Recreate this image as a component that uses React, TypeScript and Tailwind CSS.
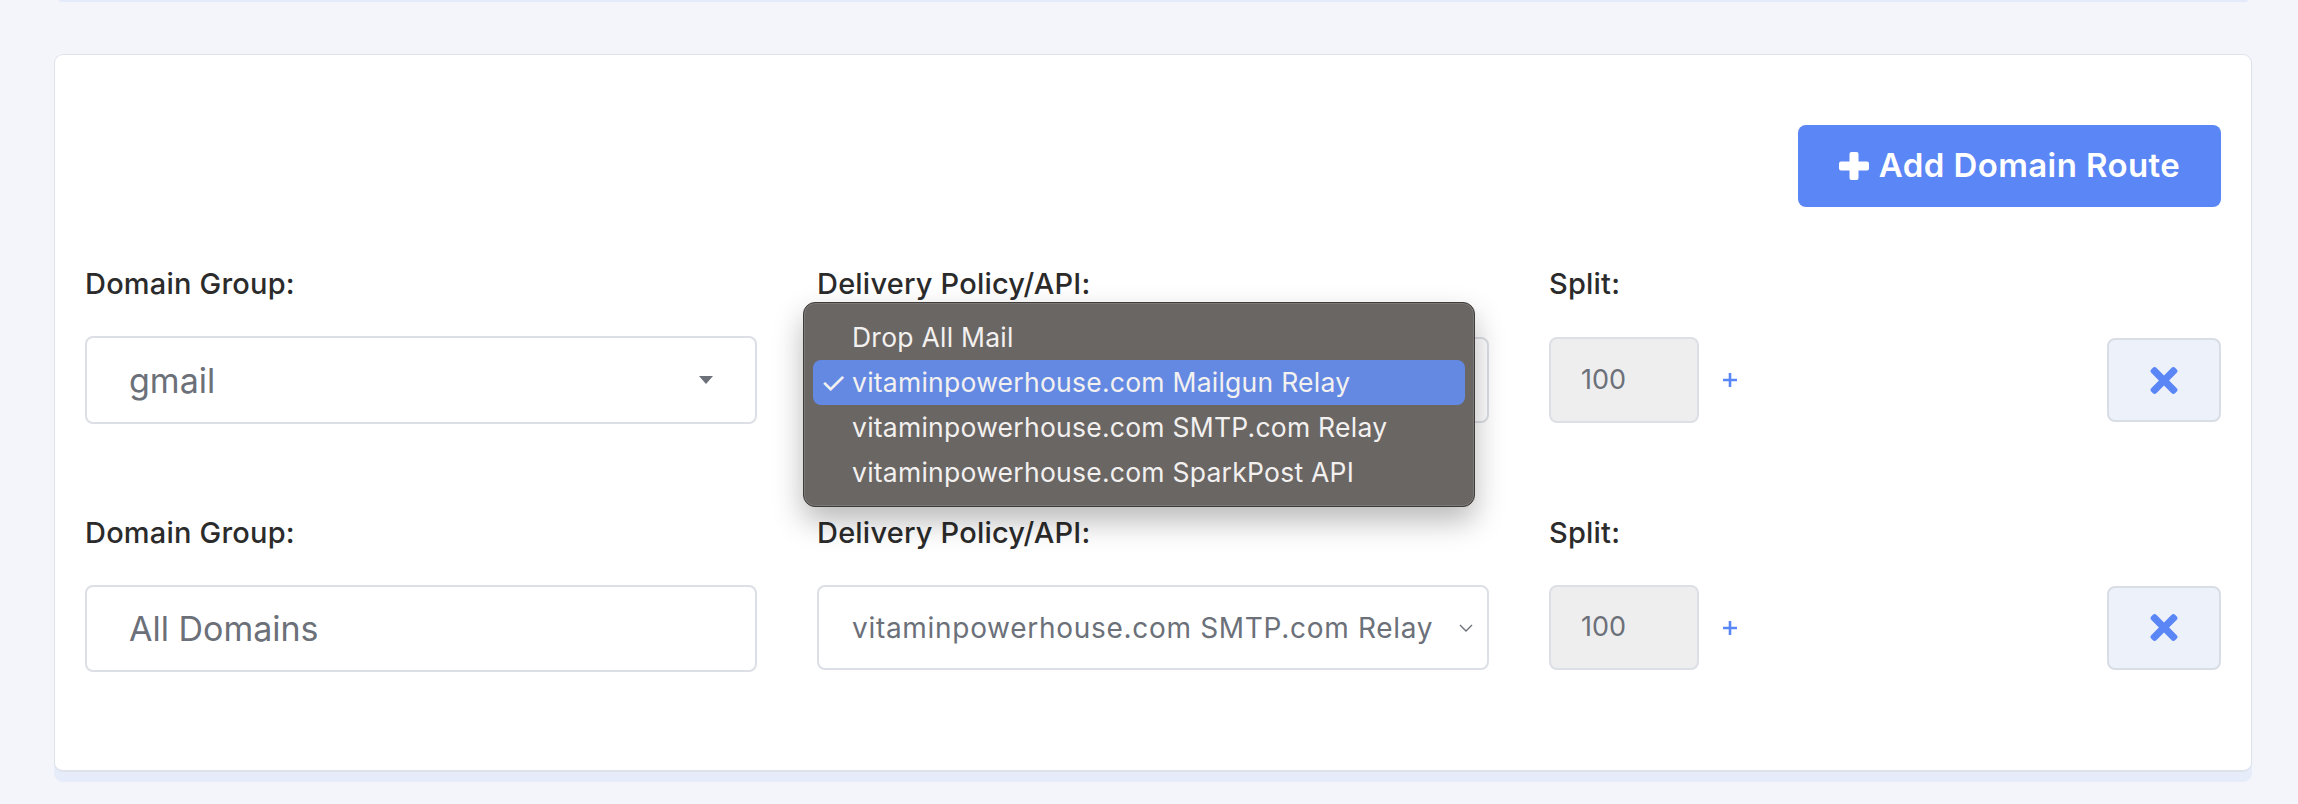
import React from 'react';

const label = "block text-[29px] leading-[45px] font-medium text-[#2b2b2b] tracking-[0.2px]";

const PlusIcon = () => (
  <svg width="30" height="28" viewBox="0 0 30 28" className="shrink-0">
    <rect x="0" y="9.5" width="30" height="9" rx="2" fill="white" />
    <rect x="10.5" y="0" width="9" height="28" rx="2" fill="white" />
  </svg>
);

const TimesIcon = () => (
  <svg width="28" height="27" viewBox="0 0 352 352">
    <path
      fill="#5b86f5"
      d="M242.72 176l100.07-100.07c12.28-12.28 12.28-32.19 0-44.48l-22.24-22.24c-12.28-12.28-32.19-12.28-44.48 0L176 109.28 75.93 9.21c-12.28-12.28-32.19-12.28-44.48 0L9.21 31.45c-12.28 12.28-12.28 32.19 0 44.48L109.28 176 9.21 276.07c-12.28 12.28-12.28 32.19 0 44.48l22.24 22.24c12.28 12.28 32.2 12.28 44.48 0L176 242.72l100.07 100.07c12.28 12.28 32.2 12.28 44.48 0l22.24-22.24c12.28-12.28 12.28-32.19 0-44.48L242.72 176z"
    />
  </svg>
);

const SmallPlus = () => (
  <svg width="16" height="16" viewBox="0 0 16 16" className="shrink-0">
    <path d="M8 1v14M1 8h14" stroke="#5b86f5" strokeWidth="2.6" />
  </svg>
);

const SolidCaret = () => (
  <svg width="14" height="8" viewBox="0 0 14 8">
    <path d="M0 0h14L7 8z" fill="#6b7079" />
  </svg>
);

const Chevron = () => (
  <svg width="14" height="8" viewBox="0 0 14 8">
    <path d="M1 1l6 6 6-6" fill="none" stroke="#6b7079" strokeWidth="1.4" />
  </svg>
);

const options = [
  'Drop All Mail',
  'vitaminpowerhouse.com Mailgun Relay',
  'vitaminpowerhouse.com SMTP.com Relay',
  'vitaminpowerhouse.com SparkPost API',
];

const NativeMenu: React.FC<{ selected: number }> = ({ selected }) => (
  <div className="absolute left-[-14px] top-[-35px] z-20 w-[672px] rounded-[12px] border border-[#3f3b39] bg-[#6a6664] px-[9px] pt-[12px] pb-[11px] shadow-[0_14px_30px_rgba(0,0,0,0.28),inset_0_0_0_1px_rgba(255,255,255,0.12)] font-['Inter'] text-[26.5px] text-[#f3f1f0]">
    {options.map((o, i) => (
      <div
        key={o}
        className={
          'flex h-[45px] items-center rounded-[8px] ' +
          (i === selected ? 'bg-[#6489e3]' : '')
        }
      >
        <span className="w-[39px] pl-[7px] text-[30px] leading-none">{i === selected ? '✓' : ''}</span>
        <span className="tracking-[0.25px]">{o}</span>
      </div>
    ))}
  </div>
);

const SplitCell = ({ h }: { h: string }) => (
  <div className="flex items-center">
    <div className={`flex w-[150px] items-center rounded-[8px] border-2 border-[#dcdfe5] bg-[#eeeeee] pl-[30px] text-[27px] text-[#6b7079] ${h}`}>
      100
    </div>
    <div className="ml-[23px]">
      <SmallPlus />
    </div>
    <button className="ml-auto flex h-[84px] w-[114px] items-center justify-center rounded-[8px] border-2 border-[#d9dde6] bg-[#edf1fa]">
      <TimesIcon />
    </button>
  </div>
);

export default function App() {
  return (
    <div className="min-h-screen bg-[#f4f5fa] font-['Inter',sans-serif]">
      <div className="ml-[59px] h-[2px] w-[2189px] rounded-b bg-[#e4eaf9]" />
      <div className="ml-[54px] mt-[52px] w-[2198px] rounded-[9px] border border-b-2 border-[#dde2eb] bg-white px-[30px] pt-[70px] pb-[98px] shadow-[0_10px_0_#e6ecfa]">
        <div className="flex justify-end">
          <button className="flex h-[82px] w-[423px] items-center justify-center gap-[10px] rounded-[8px] bg-[#5b86f5] text-[33px] font-semibold tracking-[0.4px] text-white">
            <PlusIcon />
            <span>Add Domain Route</span>
          </button>
        </div>

        <div className="mt-[54px] grid grid-cols-3 gap-x-[60px]">
          <div>
            <span className={label}>Domain Group:</span>
            <div className="mt-[30px] flex h-[88px] items-center justify-between rounded-[8px] border-2 border-[#dcdfe5] pl-[42px] pr-[42px] text-[34px] text-[#6b7079]">
              <span>gmail</span>
              <SolidCaret />
            </div>
          </div>
          <div>
            <span className={label}>Delivery Policy/API:</span>
            <div className="relative mt-[31px]">
              <div className="flex h-[86px] items-center justify-between rounded-[8px] border-2 border-[#dcdfe5] pl-[33px] pr-[14px] text-[28px] tracking-[0.7px] text-[#6b7079]">
                <span>vitaminpowerhouse.com Mailgun Relay</span>
                <Chevron />
              </div>
              <NativeMenu selected={1} />
            </div>
          </div>
          <div>
            <span className={label}>Split:</span>
            <div className="mt-[31px]">
              <SplitCell h="h-[86px]" />
            </div>
          </div>
        </div>

        <div className="mt-[86px] grid grid-cols-3 gap-x-[60px]">
          <div>
            <span className={label}>Domain Group:</span>
            <div className="mt-[30px] flex h-[87px] items-center rounded-[8px] border-2 border-[#dcdfe5] pl-[42px] text-[34px] text-[#6b7079]">
              All Domains
            </div>
          </div>
          <div>
            <span className={label}>Delivery Policy/API:</span>
            <div className="mt-[30px] flex h-[85px] items-center justify-between rounded-[8px] border-2 border-[#dcdfe5] pl-[33px] pr-[14px] text-[28px] tracking-[0.7px] text-[#6b7079]">
              <span>vitaminpowerhouse.com SMTP.com Relay</span>
              <Chevron />
            </div>
          </div>
          <div>
            <span className={label}>Split:</span>
            <div className="mt-[30px]">
              <SplitCell h="h-[85px]" />
            </div>
          </div>
        </div>
      </div>
    </div>
  );
}
